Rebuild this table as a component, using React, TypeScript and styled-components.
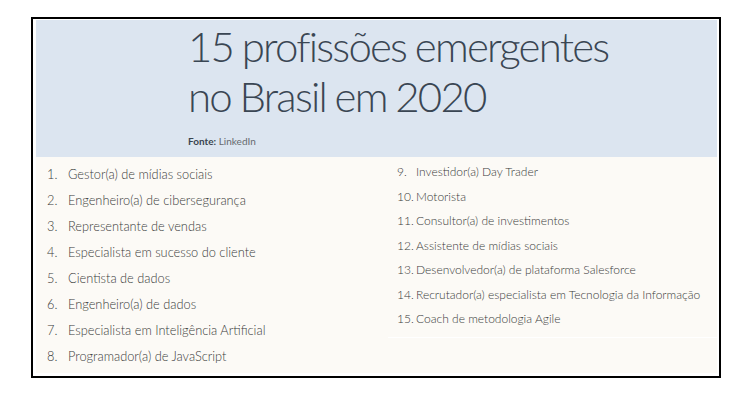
import styled, { createGlobalStyle } from 'styled-components';

const leftItems = [
    "Gestor(a) de mídias sociais",
    "Engenheiro(a) de cibersegurança",
    "Representante de vendas",
    "Especialista em sucesso do cliente",
    "Cientista de dados",
    "Engenheiro(a) de dados",
    "Especialista em Inteligência Artificial",
    "Programador(a) de JavaScript",
];

const rightItems = [
    "Investidor(a) Day Trader",
    "Motorista",
    "Consultor(a) de investimentos",
    "Assistente de mídias sociais",
    "Desenvolvedor(a) de plataforma Salesforce",
    "Recrutador(a) especialista em Tecnologia da Informação",
    "Coach de metodologia Agile",
];

function App() {
    return (
        <>
            <GlobalStyle />
            <Frame>
                <Header>
                    <Title>
                        15 profissões emergentes
                        <br />
                        no Brasil em 2020
                    </Title>
                    <Source>
                        <b>Fonte:</b> LinkedIn
                    </Source>
                </Header>
                <ListArea>
                    <Column $pad={11} $top={4}>
                        {leftItems.map((item, i) => (
                            <Row key={item} $height={26} $size={12.8}>
                                <Num $width={21}>{i + 1}.</Num>
                                <span>{item}</span>
                            </Row>
                        ))}
                    </Column>
                    <Column $pad={9} $top={3} $divider>
                        {rightItems.map((item, i) => (
                            <Row key={item} $height={24.5} $size={12}>
                                <Num $width={19}>{i + 9}.</Num>
                                <span>{item}</span>
                            </Row>
                        ))}
                    </Column>
                </ListArea>
            </Frame>
        </>
    );
}

const GlobalStyle = createGlobalStyle`
    body {
        margin: 0;
        background: #ffffff;
        font-family: Lato, "Liberation Sans", sans-serif;
    }
`;

const Frame = styled.div`
    box-sizing: border-box;
    width: 690px;
    height: 361px;
    margin: 17px 0 0 31px;
    border: 2px solid #000;
    padding: 1px 2px 3px 3px;
    display: flex;
    flex-direction: column;
    background: #fff;
`;

const Header = styled.div`
    height: 137px;
    flex: none;
    background: #dce5f0;
    padding: 1px 0 0 152px;
    box-sizing: border-box;
`;

const Title = styled.h1`
    margin: 0;
    font-family: Lato, sans-serif;
    font-weight: 300;
    font-size: 42px;
    line-height: 50px;
    color: #3a4653;
    letter-spacing: -1.8px;
    word-spacing: -1px;
`;

const Source = styled.div`
    margin-top: 13px;
    font-size: 10px;
    line-height: 14px;
    color: #666a6e;
    font-weight: 400;

    b {
        font-weight: 700;
        color: #3b4550;
    }
`;

const ListArea = styled.div`
    flex: 1;
    display: grid;
    grid-template-columns: 352px 1fr;
    align-items: start;
    background: #fcfaf6;
`;

const Column = styled.ol<{ $pad: number; $top: number; $divider?: boolean }>`
    list-style: none;
    margin: 0;
    padding: ${({ $top }) => $top}px 0 ${({ $divider }) => ($divider ? 5 : 0)}px ${({ $pad }) => $pad}px;
    border-bottom: ${({ $divider }) => ($divider ? '1px solid #ffffff' : 'none')};
`;

const Row = styled.li<{ $height: number; $size: number }>`
    display: flex;
    height: ${({ $height }) => $height}px;
    line-height: ${({ $height }) => $height}px;
    font-size: ${({ $size }) => $size}px;
    font-weight: 300;
    color: #3a3a3a;
    white-space: nowrap;
`;

const Num = styled.span<{ $width: number }>`
    width: ${({ $width }) => $width}px;
    flex: none;
`;

export default App;
